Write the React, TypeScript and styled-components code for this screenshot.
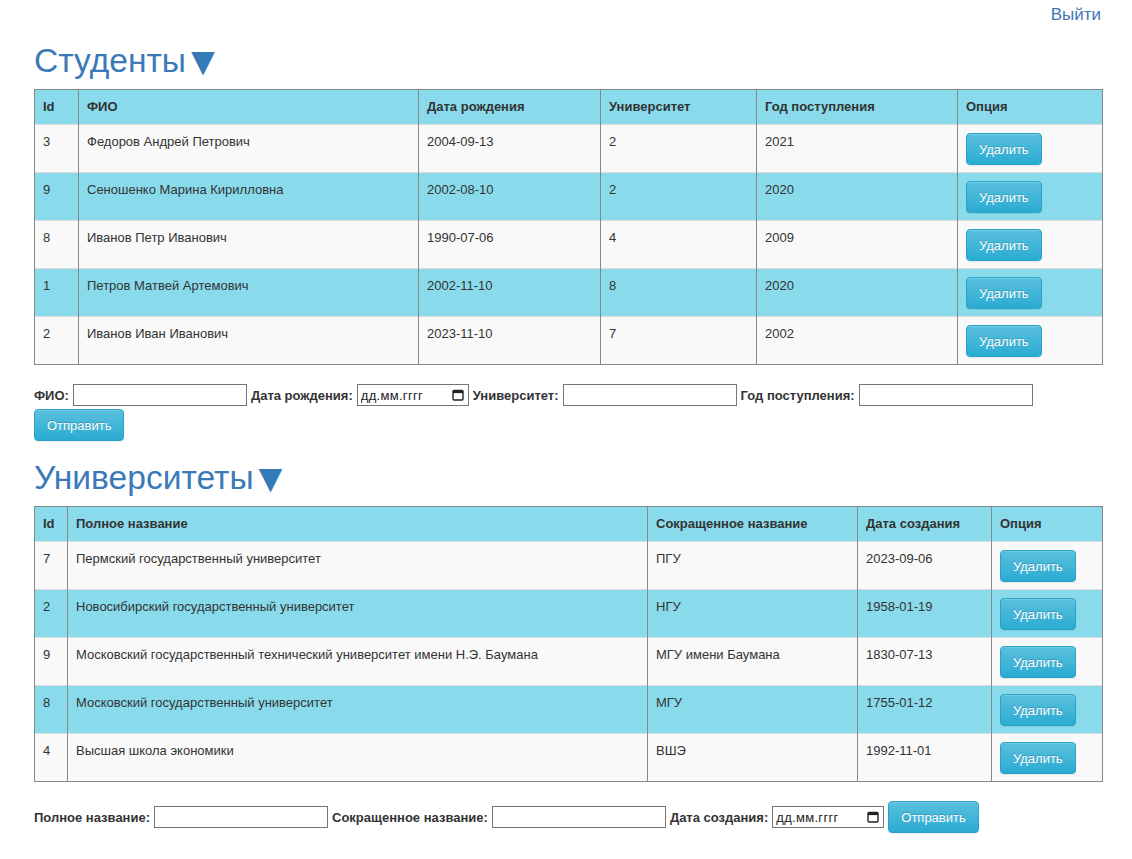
import { createGlobalStyle, styled } from "styled-components"

type Student = {
    id: number,
    fio: string,
    birth: string,
    university: number,
    year: number,
}

type University = {
    id: number,
    fullName: string,
    shortName: string,
    created: string,
}

const students: Student[] = [
    { id: 3, fio: 'Федоров Андрей Петрович', birth: '2004-09-13', university: 2, year: 2021 },
    { id: 9, fio: 'Сеношенко Марина Кирилловна', birth: '2002-08-10', university: 2, year: 2020 },
    { id: 8, fio: 'Иванов Петр Иванович', birth: '1990-07-06', university: 4, year: 2009 },
    { id: 1, fio: 'Петров Матвей Артемович', birth: '2002-11-10', university: 8, year: 2020 },
    { id: 2, fio: 'Иванов Иван Иванович', birth: '2023-11-10', university: 7, year: 2002 },
]

const universities: University[] = [
    { id: 7, fullName: 'Пермский государственный университет', shortName: 'ПГУ', created: '2023-09-06' },
    { id: 2, fullName: 'Новосибирский государственный университет', shortName: 'НГУ', created: '1958-01-19' },
    { id: 9, fullName: 'Московский государственный технический университет имени Н.Э. Баумана', shortName: 'МГУ имени Баумана', created: '1830-07-13' },
    { id: 8, fullName: 'Московский государственный университет', shortName: 'МГУ', created: '1755-01-12' },
    { id: 4, fullName: 'Высшая школа экономики', shortName: 'ВШЭ', created: '1992-11-01' },
]

const CalendarIcon = () => (
    <svg width="12" height="12" viewBox="0 0 12 12">
        <rect x="1" y="1.5" width="10" height="9.5" rx="1" fill="none" stroke="#222" strokeWidth="1.4" />
        <rect x="1" y="1.5" width="10" height="2.6" fill="#222" />
    </svg>
)

const DateInput = () => (
    <DateField>
        <DateText placeholder="дд.мм.гггг" />
        <CalendarIcon />
    </DateField>
)

export default function App() {
    return (<>
        <GlobalStyle />
        <Page>
            <TopBar>
                <LogoutLink href="#">Выйти</LogoutLink>
            </TopBar>

            <SectionTitle>Студенты<Arrow>▼</Arrow></SectionTitle>
            <Table>
                <colgroup>
                    <col style={{ width: 44 }} />
                    <col style={{ width: 340 }} />
                    <col style={{ width: 182 }} />
                    <col style={{ width: 156 }} />
                    <col style={{ width: 201 }} />
                    <col style={{ width: 145 }} />
                </colgroup>
                <thead>
                    <tr>
                        <Th>Id</Th>
                        <Th>ФИО</Th>
                        <Th>Дата рождения</Th>
                        <Th>Университет</Th>
                        <Th>Год поступления</Th>
                        <Th>Опция</Th>
                    </tr>
                </thead>
                <tbody>
                    {students.map((s) => (
                        <Row key={s.id}>
                            <Td>{s.id}</Td>
                            <Td>{s.fio}</Td>
                            <Td>{s.birth}</Td>
                            <Td>{s.university}</Td>
                            <Td>{s.year}</Td>
                            <Td><InfoButton>Удалить</InfoButton></Td>
                        </Row>
                    ))}
                </tbody>
            </Table>

            <Form onSubmit={(e) => e.preventDefault()}>
                <Label>ФИО:</Label>
                <TextInput />
                <Label>Дата рождения:</Label>
                <DateInput />
                <Label>Университет:</Label>
                <TextInput />
                <Label>Год поступления:</Label>
                <TextInput />
                <InfoButton type="submit">Отправить</InfoButton>
            </Form>

            <SectionTitle>Университеты<Arrow>▼</Arrow></SectionTitle>
            <Table>
                <colgroup>
                    <col style={{ width: 33 }} />
                    <col style={{ width: 580 }} />
                    <col style={{ width: 210 }} />
                    <col style={{ width: 134 }} />
                    <col style={{ width: 111 }} />
                </colgroup>
                <thead>
                    <tr>
                        <Th>Id</Th>
                        <Th>Полное название</Th>
                        <Th>Сокращенное название</Th>
                        <Th>Дата создания</Th>
                        <Th>Опция</Th>
                    </tr>
                </thead>
                <tbody>
                    {universities.map((u) => (
                        <Row key={u.id}>
                            <Td>{u.id}</Td>
                            <Td>{u.fullName}</Td>
                            <Td>{u.shortName}</Td>
                            <Td>{u.created}</Td>
                            <Td><InfoButton>Удалить</InfoButton></Td>
                        </Row>
                    ))}
                </tbody>
            </Table>

            <Form onSubmit={(e) => e.preventDefault()}>
                <Label>Полное название:</Label>
                <TextInput />
                <Label>Сокращенное название:</Label>
                <TextInput />
                <Label>Дата создания:</Label>
                <DateInput />
                <InfoButton type="submit">Отправить</InfoButton>
            </Form>
        </Page>
    </>)
}


const GlobalStyle = createGlobalStyle`
    body {
        margin: 0;
        background: #fff;
        font-family: "Liberation Sans", Arial, sans-serif;
        font-size: 13px;
        color: #333;
    }
`

const Page = styled.div`
    padding: 0 31px 30px 34px;
`

const TopBar = styled.div`
    display: flex;
    justify-content: flex-end;
    padding-top: 5px;
`

const LogoutLink = styled.a`
    font-size: 17px;
    line-height: 19px;
    color: #3f78b6;
    text-decoration: none;
`

const SectionTitle = styled.h1`
    margin: 19px 0 10px;
    font-size: 33.6px;
    line-height: 36px;
    font-weight: 400;
    color: #3a7ab8;
`

const Arrow = styled.span`
    display: inline-block;
    margin-left: -3px;
    font-size: 1.2em;
    line-height: 36px;
    vertical-align: top;
    color: #337ab7;
`

const Table = styled.table`
    width: 100%;
    table-layout: fixed;
    border-collapse: collapse;
    border: 1px solid #888;
`

const Th = styled.th`
    padding: 8px 8px 9px;
    line-height: 17px;
    text-align: left;
    font-weight: 700;
    color: #333;
    background: #89dbec;
    border-left: 1px solid #888;
    border-right: 1px solid #888;
`

const Row = styled.tr`
    background: #f9f9f9;

    &:nth-child(even) {
        background: #89dbec;
    }
`

const Td = styled.td`
    height: 32px;
    padding: 8px 8px 7px;
    line-height: 17px;
    vertical-align: top;
    border-top: 1px solid #ddd;
    border-left: 1px solid #888;
    border-right: 1px solid #888;
`

const InfoButton = styled.button`
    height: 32px;
    padding: 0 12px;
    font-family: inherit;
    font-size: 13px;
    color: #fff;
    text-shadow: 0 -1px 0 rgba(0, 0, 0, 0.2);
    background-image: linear-gradient(to bottom, #5bc0de 0, #2aabd2 100%);
    border: 1px solid #28a4c9;
    border-radius: 4px;
    box-shadow: inset 0 1px 0 rgba(255, 255, 255, 0.15), 0 1px 1px rgba(0, 0, 0, 0.075);
    cursor: pointer;
`

const Form = styled.form`
    display: flex;
    flex-wrap: wrap;
    align-items: center;
    column-gap: 4px;
    row-gap: 3px;
    margin-top: 19px;
`

const Label = styled.label`
    font-weight: 700;
    font-size: 13px;
    color: #333;
`

const TextInput = styled.input`
    box-sizing: border-box;
    width: 174px;
    height: 22px;
    border: 1px solid #767676;
    padding: 1px 2px;
    font-family: inherit;
    font-size: 13px;
`

const DateField = styled.div`
    box-sizing: border-box;
    display: flex;
    align-items: center;
    width: 112px;
    height: 22px;
    padding: 0 4px 0 3px;
    border: 1px solid #767676;
    background: #fff;
`

const DateText = styled.input`
    flex: 1;
    min-width: 0;
    border: none;
    outline: none;
    padding: 0;
    font-family: inherit;
    font-size: 13px;
    letter-spacing: 0.3px;

    &::placeholder {
        color: #222;
    }
`
